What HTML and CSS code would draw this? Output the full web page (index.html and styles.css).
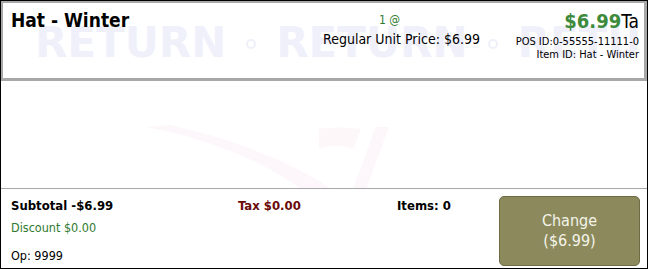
FILE: index.html
```html
<!DOCTYPE html>
<html lang="en">
<head>
    <meta charset="UTF-8">
    <title>Return Item</title>
    <link rel="stylesheet" href="styles.css">
</head>
<body>
    <div class="screen">
        <div class="item-card">
            <div class="watermark">RETURN<span class="dot"></span>RETURN<span class="dot"></span>RETURN</div>
            <div class="item-name">Hat - Winter</div>
            <div class="item-qty">
                <div class="qty">1 @</div>
                <div class="unit-price">Regular Unit Price: $6.99</div>
            </div>
            <div class="item-right">
                <div class="price"><span class="amount">$6.99</span>Ta</div>
                <div class="ids">POS ID:0-55555-11111-0</div>
                <div class="ids">Item ID: Hat - Winter</div>
            </div>
        </div>

        <div class="item-area">
            <svg class="logo-mark" width="648" height="110" viewBox="0 0 648 110">
                <path d="M145 38 C200 48 260 70 300 100 L330 100 C290 72 230 50 170 36 Z" fill="#fdf6fa"/>
                <path d="M318 40 C330 38 345 38 360 40 L352 60 C340 56 330 56 318 60 Z" fill="#fdf7fa"/>
                <path d="M375 38 L388 38 L365 100 L352 100 Z" fill="#fdf6fa"/>
            </svg>
        </div>

        <div class="totals">
            <div class="totals-info">
                <div class="row">
                    <span class="subtotal">Subtotal -$6.99</span>
                    <span class="tax">Tax $0.00</span>
                    <span class="items">Items: 0</span>
                </div>
                <div class="discount">Discount $0.00</div>
                <div class="op">Op: 9999</div>
            </div>
            <button class="change-btn">Change<br>($6.99)</button>
        </div>
    </div>
</body>
</html>
```

FILE: styles.css
```css
body {
    margin: 0;
    padding: 0;
    background-color: #fff;
    font-family: Tahoma, "DejaVu Sans Condensed", "DejaVu Sans", sans-serif;
    color: #000;
}
.screen {
    width: 648px;
    height: 269px;
    box-sizing: border-box;
    border: 1px solid #000;
    display: flex;
    flex-direction: column;
    overflow: hidden;
}
.item-card {
    position: relative;
    height: 80px;
    box-sizing: border-box;
    border: 2px solid #a8a8a8;
    border-right-width: 3px;
    border-bottom-width: 3px;
    display: flex;
    overflow: hidden;
}
.watermark {
    position: absolute;
    left: 32px;
    top: 19px;
    white-space: nowrap;
    font-family: "DejaVu Sans", sans-serif;
    font-weight: bold;
    font-size: 42px;
    line-height: 42px;
    color: #f0f0fb;
    z-index: 0;
}
.watermark .dot {
    display: inline-block;
    width: 6px;
    height: 6px;
    border: 2px solid #f0f0fb;
    border-radius: 50%;
    margin: 0 20px;
    vertical-align: 8px;
}
.item-name, .item-qty, .item-right {
    position: relative;
    z-index: 1;
}
.item-name {
    font-weight: bold;
    font-size: 19px;
    padding: 6px 0 0 8px;
    width: 300px;
}
.item-qty {
    flex: 1;
    text-align: center;
    padding-top: 10px;
}
.qty {
    color: #2f7a2f;
    font-size: 12px;
    margin-right: 31px;
}
.unit-price {
    font-size: 14px;
    margin-top: 4px;
    margin-right: 7px;
}
.item-right {
    text-align: right;
    padding: 4px 5px 0 0;
    width: 140px;
}
.price {
    font-size: 19px;
    line-height: 28px;
}
.amount {
    color: #3d8a3d;
    font-weight: bold;
    font-size: 20px;
}
.ids {
    font-size: 11px;
    line-height: 13px;
}
.ids:first-of-type {
    margin-top: 8px;
}
.item-area {
    flex: 1;
    overflow: hidden;
}
.logo-mark {
    display: block;
    margin-top: 8px;
}
.totals {
    height: 80px;
    box-sizing: border-box;
    border-top: 1px solid #a8a8a8;
    display: flex;
    padding: 7px 7px 2px 10px;
}
.totals-info {
    flex: 1;
    font-size: 12.5px;
}
.row {
    display: flex;
    font-weight: bold;
    font-size: 13px;
    padding-top: 2px;
}
.subtotal {
    width: 227px;
}
.tax {
    color: #6a0a0a;
    width: 159px;
}
.discount {
    color: #2f7a2f;
    margin-top: 7px;
}
.op {
    margin-top: 13px;
}
.change-btn {
    width: 141px;
    height: 70px;
    background-color: #8c8a5c;
    border: 1px solid #6e6c44;
    border-radius: 5px;
    color: #f4f4ea;
    font-family: inherit;
    font-size: 16px;
    line-height: 20px;
}
```
